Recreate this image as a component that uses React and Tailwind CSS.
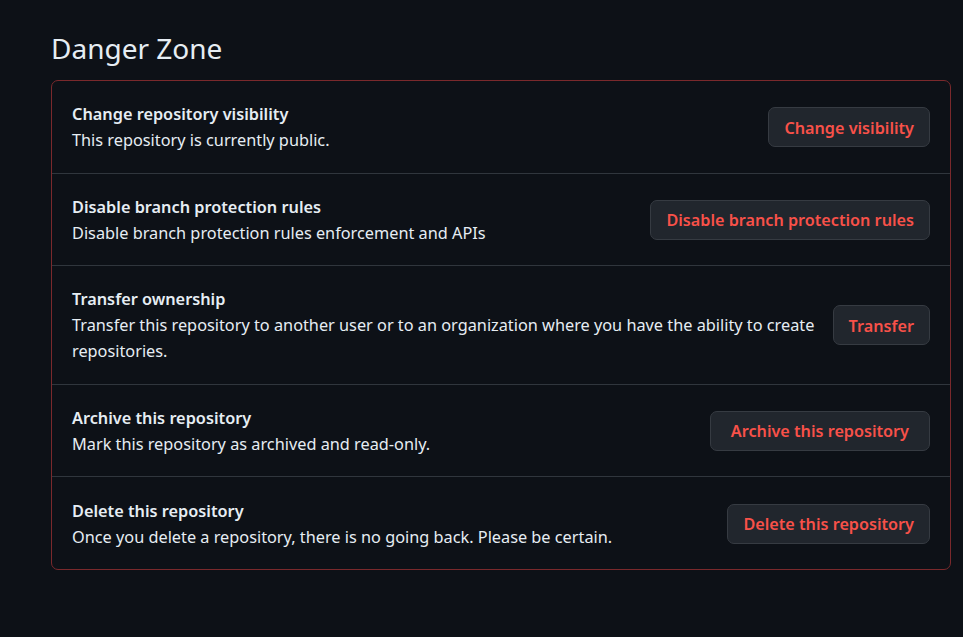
import React from "react";

const rows = [
  { title: "Change repository visibility", desc: "This repository is currently public.", btn: "Change visibility", pad: "px-[15px]" },
  { title: "Disable branch protection rules", desc: "Disable branch protection rules enforcement and APIs", btn: "Disable branch protection rules", pad: "px-[15px]" },
  { title: "Transfer ownership", desc: "Transfer this repository to another user or to an organization where you have the ability to create repositories.", btn: "Transfer", pad: "px-[15px]" },
  { title: "Archive this repository", desc: "Mark this repository as archived and read-only.", btn: "Archive this repository", pad: "px-[20px]" },
  { title: "Delete this repository", desc: "Once you delete a repository, there is no going back. Please be certain.", btn: "Delete this repository", pad: "px-[15px]" },
];

export default function App() {
  return (
    <div
      className="min-h-[637px] w-full bg-[#0d1117] text-[#e6edf3] pl-[51px] pr-[12px] pt-[29px]"
      style={{ fontFamily: '"Noto Sans", "Open Sans", sans-serif' }}
    >
      <h2 className="text-[28px] leading-[38px] font-normal mb-[13px]">Danger Zone</h2>
      <div className="border border-[#7a292c] rounded-[7px]">
        {rows.map((r, i) => (
          <div
            key={i}
            className={`flex items-center gap-4 pl-[20px] pr-[20px] pt-[20.3px] pb-[19.3px] ${i > 0 ? "border-t border-[#30363d]" : ""}`}
          >
            <div className="flex-1 min-w-0 text-[16.3px] leading-[26px]">
              <div className="font-semibold">{r.title}</div>
              <div>{r.desc}</div>
            </div>
            <button className={`shrink-0 h-[40px] ${r.pad} rounded-[7px] bg-[#21262d] border border-[#363b42] text-[#f85149] font-semibold text-[16.2px] pt-[1px]`}>
              {r.btn}
            </button>
          </div>
        ))}
      </div>
    </div>
  );
}
